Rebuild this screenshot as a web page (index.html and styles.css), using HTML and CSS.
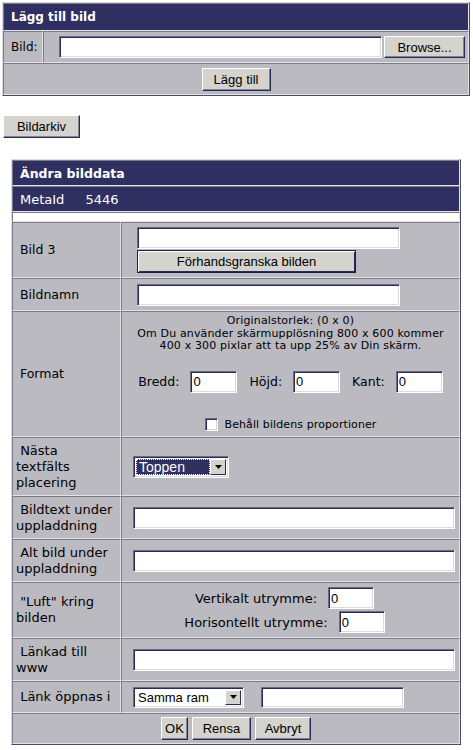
FILE: index.html
```html
<!DOCTYPE html>
<html lang="sv">
<head>
<meta charset="utf-8">
<title>Lägg till bild</title>
<link rel="stylesheet" href="styles.css">
</head>
<body>
<form class="panel add">
  <div class="cell head head-add">Lägg till bild</div>
  <div class="cell lbl-add">Bild:</div>
  <div class="cell val-add">
    <input type="text" class="txt file-in">
    <button type="button" class="btn btn-browse">Browse...</button>
  </div>
  <div class="cell foot foot-add">
    <button type="button" class="btn btn-add">Lägg till</button>
  </div>
</form>

<button type="button" class="btn btn-archive">Bildarkiv</button>

<form class="panel edit">
  <div class="cell head head-edit">Ändra bilddata</div>
  <div class="cell head meta"><span>MetaId</span><span class="meta-id">5446</span></div>
  <div class="cell blank"></div>

  <div class="cell lbl lbl-small">&nbsp;Bild 3</div>
  <div class="cell val val-stack">
    <input type="text" class="txt w-263">
    <button type="button" class="btn btn-preview">Förhandsgranska bilden</button>
  </div>

  <div class="cell lbl lbl-small">&nbsp;Bildnamn</div>
  <div class="cell val pad-15">
    <input type="text" class="txt w-263">
  </div>

  <div class="cell lbl lbl-small">&nbsp;Format</div>
  <div class="cell val val-format">
    <div class="info">
      Originalstorlek: (0 x 0)<br>
      Om Du använder skärmupplösning 800 x 600 kommer<br>
      400 x 300 pixlar att ta upp 25% av Din skärm.
    </div>
    <div class="dims">
      <label class="dim-lbl">Bredd:</label><input type="text" class="txt num" value="0">
      <label class="dim-lbl">Höjd:</label><input type="text" class="txt num" value="0">
      <label class="dim-lbl">Kant:</label><input type="text" class="txt num" value="0">
    </div>
    <label class="keep"><input type="checkbox" class="chk"><span>Behåll bildens proportioner</span></label>
  </div>

  <div class="cell lbl">&nbsp;Nästa<br>textfälts<br>placering</div>
  <div class="cell val pad-11">
    <span class="select select-hl w-96"><span class="select-val">Toppen</span><span class="select-arrow"><svg width="7" height="4" viewBox="0 0 7 4"><polygon points="0,0 7,0 3.5,4" fill="#000"/></svg></span></span>
  </div>

  <div class="cell lbl">&nbsp;Bildtext under<br>uppladdning</div>
  <div class="cell val pad-11">
    <input type="text" class="txt w-322">
  </div>

  <div class="cell lbl">&nbsp;Alt bild under<br>uppladdning</div>
  <div class="cell val pad-11">
    <input type="text" class="txt w-322">
  </div>

  <div class="cell lbl">&nbsp;"Luft" kring<br>bilden</div>
  <div class="cell val val-space">
    <div class="space-line"><label>Vertikalt utrymme:</label><input type="text" class="txt num-s" value="0"></div>
    <div class="space-line"><label>Horisontellt utrymme:</label><input type="text" class="txt num-s" value="0"></div>
  </div>

  <div class="cell lbl">&nbsp;Länkad till<br>www</div>
  <div class="cell val pad-11">
    <input type="text" class="txt w-322">
  </div>

  <div class="cell lbl">&nbsp;Länk öppnas i</div>
  <div class="cell val pad-11">
    <span class="select w-111"><span class="select-val">Samma ram</span><span class="select-arrow"><svg width="7" height="4" viewBox="0 0 7 4"><polygon points="0,0 7,0 3.5,4" fill="#000"/></svg></span></span>
    <input type="text" class="txt w-143 target">
  </div>

  <div class="cell foot foot-edit">
    <button type="button" class="btn btn-ok">OK</button>
    <button type="button" class="btn btn-reset">Rensa</button>
    <button type="button" class="btn btn-cancel">Avbryt</button>
  </div>
</form>
</body>
</html>
```

FILE: styles.css
```css
* {
  box-sizing: border-box;
}

body {
  margin: 2px;
  background: #ffffff;
  color: #000000;
  font-family: "DejaVu Sans", Verdana, sans-serif;
  font-size: 12px;
}

form {
  margin: 0;
}

/* ---------- form controls (base) ---------- */
.txt {
  height: 22px;
  padding: 0 2px;
  margin: 0;
  background: #ffffff;
  font-family: "Liberation Sans", Arial, sans-serif;
  font-size: 13px;
  color: #000000;
  border: 1px solid;
  border-color: #6a6a80 #ffffff #ffffff #6a6a80;
  box-shadow: inset 1px 1px 0 #2a2a5c, inset -1px -1px 0 #dcdcdc;
  outline: none;
}

.btn {
  height: 23px;
  padding: 0;
  margin: 0;
  background: #d4d3cd;
  font-family: "Liberation Sans", Arial, sans-serif;
  font-size: 13px;
  color: #000000;
  border: 1px solid;
  border-color: #ffffff #2a2a5a #2a2a5a #ffffff;
  box-shadow: inset -1px -1px 0 #84848e;
  cursor: default;
}

.select {
  display: inline-flex;
  align-items: stretch;
  height: 21px;
  padding: 1px;
  background: #ffffff;
  font-family: "Liberation Sans", Arial, sans-serif;
  font-size: 13px;
  border: 1px solid;
  border-color: #6a6a80 #ffffff #ffffff #6a6a80;
  box-shadow: inset 1px 1px 0 #2a2a5c, inset -1px -1px 0 #dcdcdc;
}

.select-val {
  flex: 1;
  display: flex;
  align-items: center;
  padding-left: 3px;
  white-space: nowrap;
  overflow: hidden;
}

.select-hl .select-val {
  margin: 1px 0 1px 1px;
  background: #2f2f62;
  color: #ffffff;
  font-size: 14px;
  outline: 1px dotted #ffffff;
  outline-offset: -1px;
}

.select-arrow {
  width: 16px;
  display: flex;
  align-items: center;
  justify-content: center;
  margin: 1px 1px 1px 0;
  background: #d4d3cd;
  border: 1px solid;
  border-color: #ffffff #2a2a5a #2a2a5a #ffffff;
}

.chk {
  appearance: none;
  -webkit-appearance: none;
  width: 13px;
  height: 13px;
  margin: 0 7px 0 0;
  background: #ffffff;
  border: 1px solid;
  border-color: #6a6a78 #ffffff #ffffff #6a6a78;
  box-shadow: inset 1px 1px 0 #2f2f62, inset -1px -1px 0 #d4d3cd;
}

/* sizes */
.w-263 { width: 263px; }
.w-322 { width: 322px; }
.w-143 { width: 143px; height: 21px; }
.w-96 { width: 96px; height: 22px; }
.w-111 { width: 111px; }
.num { width: 47px; }
.num-s { width: 46px; }

.btn-browse { width: 81px; height: 22px; }
.btn-add { width: 69px; }
.btn-preview {
  width: 219px;
  border-color: #1e1e44;
  box-shadow: inset 1px 1px 0 #ffffff, inset -1px -1px 0 #2a2a5a;
}
.btn-ok { width: 27px; }
.btn-reset { width: 59px; }
.btn-cancel { width: 56px; }

/* ---------- panels (table look) ---------- */
.panel {
  display: grid;
  background: #bbbac0;
  border: 1px solid;
  border-color: #dadada #4c4c5e #4c4c5e #dadada;
}

.cell {
  display: flex;
  align-items: center;
  min-width: 0;
  border: 1px solid;
  border-color: #7c7c88 #e4e4e8 #e4e4e8 #7c7c88;
}

.head {
  grid-column: 1 / -1;
  background: #2f2f62;
  color: #ffffff;
}

.foot {
  grid-column: 1 / -1;
  justify-content: center;
}

/* ---------- add panel ---------- */
.add {
  width: 468px;
  grid-template-columns: 40px 426px;
  grid-template-rows: 28px 32px 32px;
}

.head-add {
  padding-left: 7px;
  font-weight: bold;
  font-size: 12px;
}

.lbl-add {
  padding-left: 7px;
  font-size: 12px;
}

.val-add {
  padding-left: 15px;
}

.file-in {
  width: 323px;
  margin-right: 2px;
}

/* ---------- archive button ---------- */
.btn-archive {
  display: block;
  margin: 19px 0 0 1px;
  width: 77px;
}

/* ---------- edit panel ---------- */
.edit {
  margin: 21px 0 0 9px;
  width: 450px;
  grid-template-columns: 109px 339px;
  grid-template-rows: 26px 26px 10px 56px 33px 126px 59px 43px 43px 56px 43px 32px 31px;
}

.head-edit {
  padding-left: 7px;
  font-weight: bold;
  font-size: 12.5px;
}

.meta {
  padding-left: 7px;
  font-size: 13px;
}

.meta-id {
  margin-left: 21px;
}

.blank {
  grid-column: 1 / -1;
  background: #ffffff;
}

.lbl {
  padding-left: 3px;
  font-size: 13px;
  line-height: 16px;
}

.lbl-small {
  font-size: 12.5px;
}

.pad-15 {
  padding-left: 15px;
}

.pad-11 {
  padding-left: 11px;
}

.val-stack {
  flex-direction: column;
  align-items: flex-start;
  justify-content: center;
  gap: 1px;
  padding-left: 15px;
}

/* format cell */
.val-format {
  flex-direction: column;
  align-items: center;
  justify-content: flex-start;
  padding-top: 3px;
}

.info {
  font-size: 11px;
  letter-spacing: 0.15px;
  line-height: 12.5px;
  text-align: center;
}

.dims {
  display: flex;
  align-items: center;
  margin-top: 18px;
  font-size: 12.5px;
}

.dim-lbl {
  margin: 0 11px 0 12px;
}

.dim-lbl:first-child {
  margin-left: 0;
}

.keep {
  display: flex;
  align-items: center;
  margin-top: 25px;
  font-size: 11px;
  letter-spacing: 0.1px;
}

/* spacing cell */
.val-space {
  flex-direction: column;
  align-items: center;
  justify-content: center;
  gap: 2px;
  padding-right: 12px;
  font-size: 13px;
}

.space-line {
  display: flex;
  align-items: center;
}

.space-line label {
  margin-right: 11px;
}

.target {
  margin-left: 17px;
}

.foot-edit {
  gap: 4px;
}
```
